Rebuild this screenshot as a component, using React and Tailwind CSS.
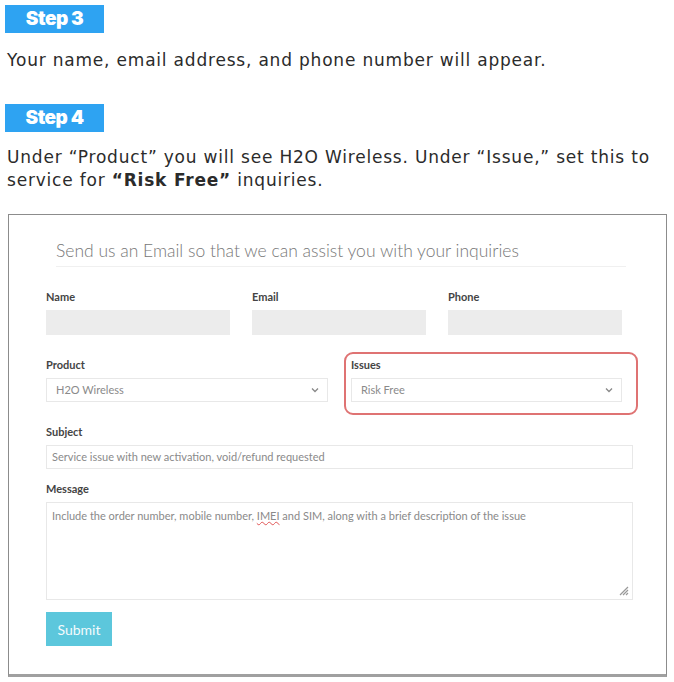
import React from 'react'

const lato = { fontFamily: 'Lato, "Open Sans", sans-serif' }
const body = { fontFamily: '"DejaVu Sans", "Open Sans", sans-serif' }

function Badge({ children, className = '' }) {
  return (
    <div className={`ml-[5px] w-[99px] h-[28px] bg-[#2ea3f2] flex items-center justify-center ${className}`}>
      <span className="text-white text-[19px] font-black tracking-[-0.5px]" style={{ fontFamily: 'Inter, sans-serif' }}>{children}</span>
    </div>
  )
}

function Label({ children }) {
  return <div className="text-[11px] leading-[14px] font-bold text-[#444] mb-[6px]">{children}</div>
}

function Chevron() {
  return (
    <svg width="8" height="6" viewBox="0 0 8 6" className="shrink-0">
      <path d="M1 1.5 L4 4.5 L7 1.5" fill="none" stroke="#888" strokeWidth="1.3" />
    </svg>
  )
}

function Select({ value, width }) {
  return (
    <div className={`${width} h-[24px] border border-[#e8e8e8] flex items-center justify-between pl-[9px] pr-[8px] text-[11px] leading-[14px]`}>
      <span className="text-[#8a8a8a]">{value}</span>
      <Chevron />
    </div>
  )
}

export default function App() {
  return (
    <div className="w-[674px] h-[682px] bg-white overflow-hidden">
      <Badge className="mt-[5px]">Step 3</Badge>
      <p className="ml-[7px] mt-[15px] text-[17px] leading-[24px] tracking-[0.8px] text-[#2b2b2b]" style={body}>
        Your name, email address, and phone number will appear.
      </p>
      <Badge className="mt-[32px]">Step 4</Badge>
      <p className="ml-[7px] mt-[14px] w-[645px] text-[17px] leading-[23px] tracking-[0.8px] text-[#2b2b2b]" style={body}>
        Under “Product” you will see H2O Wireless. Under “Issue,” set this to service for <b className="font-bold">“Risk Free”</b> inquiries.
      </p>

      {/* form screenshot */}
      <div className="ml-[8px] mt-[22px] w-[659px] h-[463px] border border-[#8c8c8c] border-b-[3px] border-b-[#a0a0a0] pl-[37px]" style={lato}>
        <div className="mt-[24px] ml-[10px] w-[570px] pb-[3px] border-b border-[#f0f0f0]">
          <span className="text-[17.5px] leading-[24px] font-light text-[#777]">
            Send us an Email so that we can assist you with your inquiries
          </span>
        </div>

        <div className="mt-[23px] flex gap-[22px]">
          <div className="w-[184px]">
            <Label>Name</Label>
            <div className="h-[25px] bg-[#ececec]" />
          </div>
          <div className="w-[174px]">
            <Label>Email</Label>
            <div className="h-[25px] bg-[#ececec]" />
          </div>
          <div className="w-[174px]">
            <Label>Phone</Label>
            <div className="h-[25px] bg-[#ececec]" />
          </div>
        </div>

        <div className="mt-[17px] flex items-start">
          <div className="pt-[6px] w-[282px]">
            <Label>Product</Label>
            <Select value="H2O Wireless" width="w-[282px]" />
          </div>
          <div className="ml-[16px] w-[294px] border-2 border-[#df7373] rounded-[9px] pl-[5px] pt-[4px] pb-[11px]">
            <Label>Issues</Label>
            <Select value="Risk Free" width="w-[271px]" />
          </div>
        </div>

        <div className="mt-[10px] w-[587px]">
          <Label>Subject</Label>
          <div className="h-[24px] border border-[#e8e8e8] flex items-center pl-[5px] text-[11px] leading-[14px]">
            <span className="text-[#8a8a8a]">Service issue with new activation, void/refund requested</span>
          </div>
        </div>

        <div className="mt-[13px] w-[587px]">
          <Label>Message</Label>
          <div className="relative h-[98px] border border-[#e8e8e8] pl-[5px] pt-[6px] text-[11px] leading-[14px]">
            <span className="text-[#8a8a8a]">
              Include the order number, mobile number, <span className="underline decoration-wavy decoration-[#e05555] decoration-1">IMEI</span> and SIM, along with a brief description of the issue
            </span>
            <svg width="10" height="10" viewBox="0 0 10 10" className="absolute right-[3px] bottom-[3px]">
              <path d="M9 1 L1 9 M9 4 L4 9 M9 7 L7 9" stroke="#999" strokeWidth="1.2" />
            </svg>
          </div>
        </div>

        <div className="mt-[12px] w-[66px] h-[34px] bg-[#5cc7dc] flex items-center justify-center">
          <span className="text-[14px] text-[#f4fbfd]">Submit</span>
        </div>
      </div>
    </div>
  )
}
